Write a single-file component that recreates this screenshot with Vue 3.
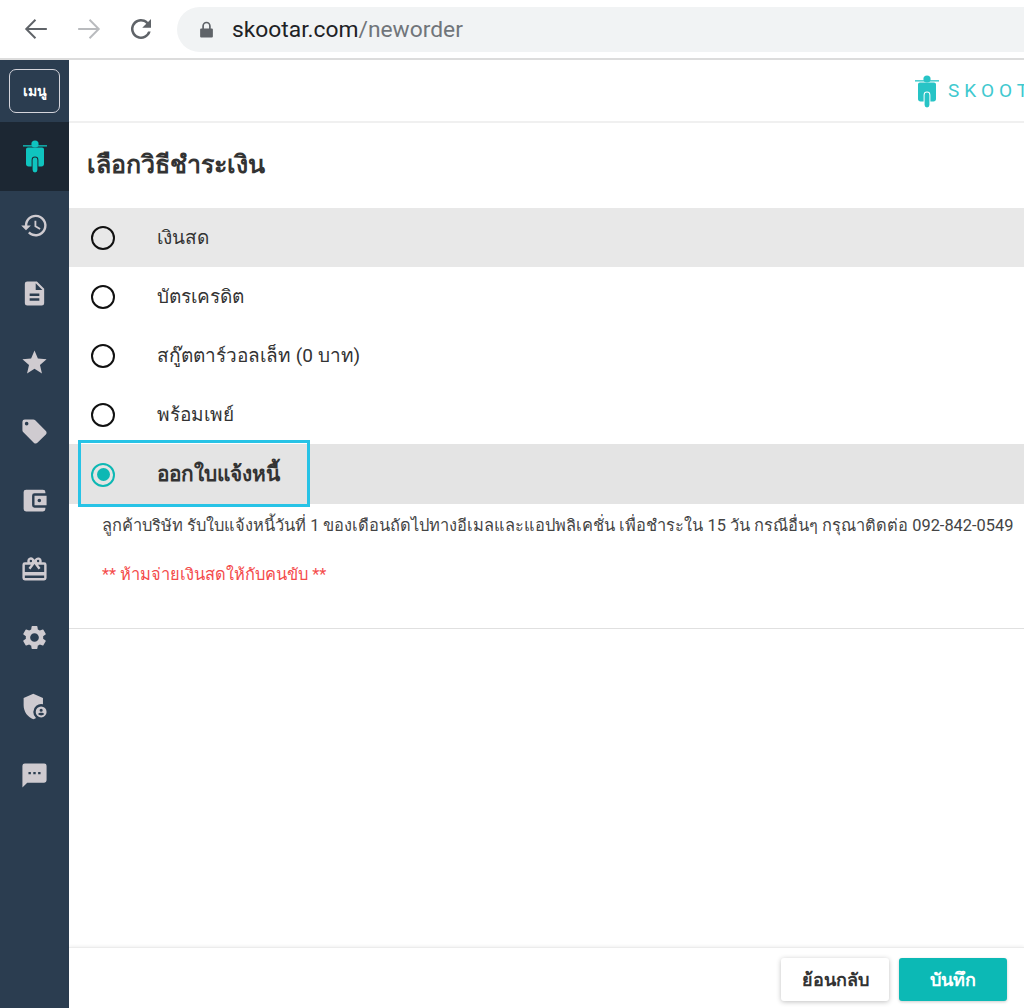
<script setup>
const navIcons = [
  { name: 'history', d: 'M13 3a9 9 0 0 0-9 9H1l3.900 3.900.1.1L9 12H6a7 7 0 1 1 2.050 4.950l-1.420 1.420A9 9 0 1 0 13 3zm-1 5v5l4.250 2.520.77-1.280-3.520-2.090V8H12z' },
  { name: 'doc', d: 'M14 2H6a2 2 0 0 0-2 2v16a2 2 0 0 0 2 2h12a2 2 0 0 0 2-2V8l-6-6zm2 16H8v-2h8v2zm0-4H8v-2h8v2zm-3-5V3.500L18.500 9H13z' },
  { name: 'star', d: 'M12 17.270 18.180 21l-1.640-7.030L22 9.240l-7.190-.61L12 2 9.190 8.630 2 9.240l5.460 4.730L5.820 21z' },
  { name: 'tag', d: 'M21.410 11.580l-9-9A2 2 0 0 0 11 2H4a2 2 0 0 0-2 2v7c0 .55.22 1.050.59 1.420l9 9c.36.36.86.58 1.410.58s1.050-.22 1.410-.59l7-7c.37-.36.59-.86.59-1.410s-.23-1.060-.59-1.420zM5.500 7A1.500 1.500 0 1 1 5.500 4a1.500 1.500 0 0 1 0 3z' },
  { name: 'wallet', d: 'M21 18v1a2 2 0 0 1-2 2H5a2 2 0 0 1-2-2V5a2 2 0 0 1 2-2h14a2 2 0 0 1 2 2v1h-9a2 2 0 0 0-2 2v8a2 2 0 0 0 2 2h9zm-9-2h10V8H12v8zm4-2.500a1.500 1.500 0 1 1 0-3 1.500 1.500 0 0 1 0 3z' },
  { name: 'gift', d: 'M20 6h-2.180c.11-.31.18-.65.18-1a3 3 0 0 0-5.500-1.650l-.5.67-.5-.68A3 3 0 0 0 6 5c0 .35.07.69.18 1H4a2 2 0 0 0-2 2v11a2 2 0 0 0 2 2h16a2 2 0 0 0 2-2V8a2 2 0 0 0-2-2zm-5-2a1 1 0 1 1 0 2 1 1 0 0 1 0-2zM9 4a1 1 0 1 1 0 2 1 1 0 0 1 0-2zm11 15H4v-2h16v2zm0-5H4V8h5.080L7 10.830 8.620 12 12 7.400l3.380 4.600L17 10.830 14.920 8H20v6z' },
  { name: 'gear', d: 'M19.140 12.940c.04-.3.06-.61.06-.94 0-.32-.02-.64-.07-.94l2.030-1.580a.49.49 0 0 0 .12-.61l-1.920-3.320a.49.49 0 0 0-.59-.22l-2.390.96a7 7 0 0 0-1.620-.94l-.36-2.540a.48.48 0 0 0-.48-.41h-3.840a.47.47 0 0 0-.47.41l-.36 2.540c-.59.24-1.130.57-1.620.94l-2.390-.96a.48.48 0 0 0-.59.22L2.740 8.870a.47.47 0 0 0 .12.61l2.030 1.580c-.05.3-.09.63-.09.94s.02.64.07.94l-2.030 1.580a.49.49 0 0 0-.12.61l1.920 3.320c.12.22.37.29.59.22l2.390-.96c.5.38 1.030.7 1.620.94l.36 2.540c.05.24.24.41.48.41h3.840c.24 0 .44-.17.47-.41l.36-2.540c.59-.24 1.130-.56 1.620-.94l2.390.96c.22.08.47 0 .59-.22l1.920-3.320a.46.46 0 0 0-.12-.61l-2.010-1.580zM12 15.600a3.600 3.600 0 1 1 0-7.200 3.600 3.600 0 0 1 0 7.200z' },
  { name: 'shield', d: 'M11 1.500 3 5v6c0 5.200 3.400 10 8 11.500.8-.26 1.550-.62 2.250-1.070A6.500 6.500 0 0 1 11 16.500a6.500 6.500 0 0 1 8-6.320V5l-8-3.500zM17.500 12a4.500 4.500 0 1 0 0 9 4.500 4.500 0 0 0 0-9zm0 1.800a1.300 1.300 0 1 1 0 2.600 1.300 1.300 0 0 1 0-2.600zm0 5.600c-1.100 0-2.050-.45-2.600-1.200.4-.6 1.500-.95 2.600-.95s2.200.35 2.600.95c-.55.75-1.500 1.200-2.600 1.200z' },
  { name: 'sms', d: 'M20 2H4a2 2 0 0 0-2 2v18l4-4h14a2 2 0 0 0 2-2V4a2 2 0 0 0-2-2zM9 11H7V9h2v2zm4 0h-2V9h2v2zm4 0h-2V9h2v2z' }
]
const options = [
  { label: 'เงินสด', shaded: true },
  { label: 'บัตรเครดิต' },
  { label: 'สกู๊ตตาร์วอลเล็ท (0 บาท)' },
  { label: 'พร้อมเพย์' },
  { label: 'ออกใบแจ้งหนี้', shaded: true, selected: true }
]
const scooterBody = 'M5 8.500h14c1.200 0 2 .8 2 2V25c0 1.500-1 2.500-2.500 2.500h-3.100V21a3.400 3.400 0 0 0-6.800 0v6.500H5.500C4 27.500 3 26.500 3 25V10.500c0-1.200.8-2 2-2z'
const scooterWheel = 'M9.600 21a2.400 2.400 0 0 1 4.800 0v10a2.400 2.400 0 0 1-4.800 0V21z'
</script>

<template>
  <div class="page">
    <div class="browser">
      <svg class="bicon back" viewBox="0 0 24 24"><path d="M22 12H3M11.500 3.500 3 12l8.500 8.500" /></svg>
      <svg class="bicon fwd" viewBox="0 0 24 24"><path d="M2 12h19M12.500 3.500 21 12l-8.500 8.500" /></svg>
      <svg class="bicon reload" viewBox="0 0 24 24"><path class="fill" d="M17.650 6.350A8 8 0 1 0 19.730 14h-2.080A6 6 0 1 1 12 6c1.660 0 3.140.69 4.220 1.780L13 11h7V4l-2.350 2.350z" /></svg>
      <div class="omnibox">
        <svg class="lock" viewBox="0 0 14 16"><path d="M3 7V4.600a4 4 0 0 1 8 0V7h1a1 1 0 0 1 1 1v6.500a1 1 0 0 1-1 1H2a1 1 0 0 1-1-1V8a1 1 0 0 1 1-1h1zm1.600 0h4.800V4.600a2.400 2.400 0 0 0-4.800 0V7z" /></svg>
        <span class="url"><span class="host">skootar.com</span>/neworder</span>
      </div>
    </div>
    <div class="app">
      <aside class="sidebar">
        <div class="menu-wrap"><div class="menu-btn">เมนู</div></div>
        <div class="nav-item active">
          <svg class="scooter" viewBox="0 0 24 34">
            <path d="M0 6.200h24v1.300H0z" />
            <circle cx="12" cy="5" r="3.600" />
            <path :d="scooterBody" />
            <path :d="scooterWheel" />
          </svg>
        </div>
        <div v-for="icon in navIcons" :key="icon.name" class="nav-item">
          <svg class="nav-icon" viewBox="0 0 24 24"><path :d="icon.d" /></svg>
        </div>
      </aside>
      <main class="main">
        <header class="topbar">
          <svg class="logo" viewBox="0 0 24 34">
            <path d="M0 6.200h24v1.300H0z" />
            <circle cx="12" cy="5" r="3.600" />
            <path :d="scooterBody" />
            <path :d="scooterWheel" />
          </svg>
          <span class="logo-text">SKOOT</span>
        </header>
        <section class="content">
          <h1 class="title">เลือกวิธีชำระเงิน</h1>
          <div class="options">
            <div v-for="o in options" :key="o.label" class="option" :class="{ shaded: o.shaded, selected: o.selected }">
              <span class="radio"><span v-if="o.selected" class="dot"></span></span>
              <span class="label">{{ o.label }}</span>
              <span v-if="o.selected" class="highlight"></span>
            </div>
          </div>
          <div class="detail">
            <p class="note">ลูกค้าบริษัท รับใบแจ้งหนี้วันที่ 1 ของเดือนถัดไปทางอีเมลและแอปพลิเคชั่น เพื่อชำระใน 15 วัน กรณีอื่นๆ กรุณาติดต่อ 092-842-0549</p>
            <p class="warn">** ห้ามจ่ายเงินสดให้กับคนขับ **</p>
          </div>
        </section>
        <footer class="footer">
          <button class="btn ghost">ย้อนกลับ</button>
          <button class="btn primary">บันทึก</button>
        </footer>
      </main>
    </div>
  </div>
</template>

<style>
html, body { margin: 0; overflow: hidden; background: #fff; }
</style>

<style scoped>
.page { width: 1024px; height: 1008px; display: flex; flex-direction: column; overflow: hidden; font-family: Roboto, "Noto Sans", sans-serif; color: #333; }
.browser { height: 58px; flex: none; display: flex; align-items: center; background: #fff; border-bottom: 2px solid #dcdcdc; padding-left: 23px; }
.bicon { width: 26px; height: 26px; flex: none; }
.bicon path { fill: none; stroke: #5f6368; stroke-width: 1.800; }
.bicon path.fill { fill: #5f6368; stroke: none; }
.back { margin-right: 27px; }
.fwd { margin-right: 24px; }
.fwd path { stroke: #b9bbbe; }
.reload { width: 30px; height: 30px; margin-right: 21px; }
.omnibox { flex: 1; height: 45px; margin-right: -40px; background: #f1f3f4; border-radius: 23px; display: flex; align-items: center; padding-left: 22px; }
.lock { width: 15px; height: 17px; fill: #5f6368; margin-right: 18px; }
.url { font-family: Roboto, sans-serif; font-size: 22.800px; color: #70757a; }
.host { color: #202124; }
.app { flex: 1; display: flex; min-height: 0; }
.sidebar { width: 69px; flex: none; background: #2b3d50; display: flex; flex-direction: column; }
.menu-wrap { height: 62px; flex: none; display: flex; align-items: center; justify-content: center; }
.menu-btn { width: 51px; height: 44px; box-sizing: border-box; border: 1px solid #d5d5dc; border-radius: 7px; color: #fff; font-size: 14px; font-weight: 700; display: flex; align-items: center; justify-content: center; }
.nav-item { height: 68.800px; flex: none; display: flex; align-items: center; justify-content: center; }
.nav-item.active { background: #1c2733; }
.nav-icon { width: 29px; height: 29px; fill: #cfcbd0; }
.scooter { width: 24px; height: 34px; fill: #0fc4bf; }
.main { flex: 1; display: flex; flex-direction: column; min-width: 0; }
.topbar { height: 61px; flex: none; border-bottom: 2px solid #f0f0f0; display: flex; align-items: center; padding-left: 846px; background: #fff; white-space: nowrap; overflow: hidden; }
.logo { width: 24px; height: 34px; fill: #27c4c6; flex: none; margin-right: 9px; }
.logo-text { font-size: 19px; color: #3fc9cf; letter-spacing: 5px; }
.content { flex: 1; min-height: 0; }
.title { margin: 0; height: 85px; box-sizing: border-box; padding: 26px 0 0 18px; font-size: 25px; line-height: 32px; font-weight: 700; color: #333; }
.option { position: relative; height: 59px; display: flex; align-items: center; padding: 1px 0 0 22px; box-sizing: border-box; }
.option.shaded { background: #e8e8e8; }
.option.selected { background: #e4e4e4; height: 60px; }
.radio { width: 24px; height: 24px; box-sizing: border-box; border: 2.500px solid #111; border-radius: 50%; display: flex; align-items: center; justify-content: center; flex: none; }
.selected .radio { border-color: #0db8b4; }
.dot { width: 13px; height: 13px; border-radius: 50%; background: #0db8b4; }
.label { margin: 0 0 2px 42px; font-size: 19px; color: #333; }
.selected .label { font-weight: 700; font-size: 20.800px; }
.highlight { position: absolute; left: 9px; top: -4px; width: 232px; height: 67px; box-sizing: border-box; border: 3px solid #27c3e6; pointer-events: none; }
.detail { height: 125px; box-sizing: border-box; padding: 10px 0 0 33px; border-bottom: 1px solid #e0e0e0; }
.note { margin: 0; font-size: 16.400px; line-height: 24px; color: #444; white-space: nowrap; }
.warn { margin: 25px 0 0; font-size: 16.400px; line-height: 24px; color: #f44b4b; }
.footer { height: 61px; flex: none; box-sizing: border-box; border-top: 1px solid #ececec; box-shadow: 0 -1px 3px rgba(0,0,0,.06); display: flex; justify-content: flex-end; gap: 10px; padding: 10px 17px 0 0; background: #fff; }
.btn { width: 108px; height: 43px; border: none; border-radius: 3px; font-family: inherit; font-size: 18px; font-weight: 700; }
.ghost { background: #fff; color: #333; box-shadow: 0 1px 5px rgba(0,0,0,.25); }
.primary { background: #0cb9b5; color: #fff; box-shadow: 0 1px 3px rgba(0,0,0,.2); }
</style>
